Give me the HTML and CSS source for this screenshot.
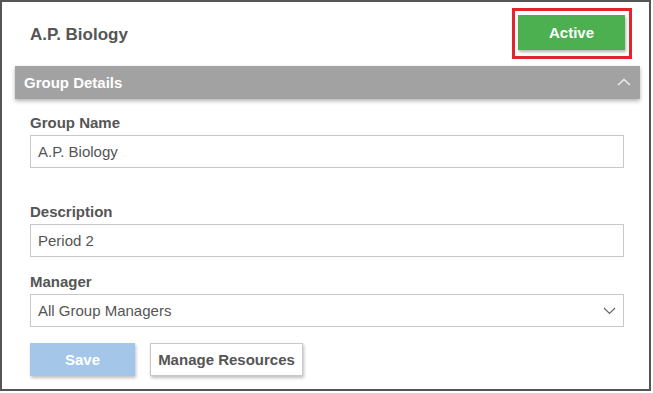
FILE: index.html
```html
<!DOCTYPE html>
<html lang="en">
<head>
    <meta charset="UTF-8">
    <meta name="viewport" content="width=device-width, initial-scale=1.0">
    <title>A.P. Biology</title>
    <link rel="stylesheet" href="styles.css">
</head>
<body>
    <div class="frame">
        <div class="top">
            <h1>A.P. Biology</h1>
            <div class="highlight">
                <button class="active-button">Active</button>
            </div>
        </div>

        <!-- Group details panel -->
        <div class="panel-header">
            <span>Group Details</span>
            <svg class="chevron-up" width="14" height="8" viewBox="0 0 14 8">
                <polyline points="1,7 7,1.5 13,7" fill="none" stroke="#f2f2f2" stroke-width="1.3"/>
            </svg>
        </div>

        <form class="details">
            <div class="form-group first">
                <label>Group Name</label>
                <input type="text" value="A.P. Biology">
            </div>
            <div class="form-group">
                <label>Description</label>
                <input type="text" value="Period 2">
            </div>
            <div class="form-group">
                <label>Manager</label>
                <div class="select">
                    <span>All Group Managers</span>
                    <svg width="13" height="8" viewBox="0 0 13 8">
                        <polyline points="1,1 6.5,6.5 12,1" fill="none" stroke="#666" stroke-width="1.2"/>
                    </svg>
                </div>
            </div>
            <div class="buttons">
                <button type="button" class="save-button">Save</button>
                <button type="button" class="resources-button">Manage Resources</button>
            </div>
        </form>
    </div>
</body>
</html>
```

FILE: styles.css
```css
body {
    font-family: 'Liberation Sans', Arial, sans-serif;
    background-color: #fff;
    margin: 0;
    padding: 0;
    color: #555;
}
.frame {
    width: 651px;
    height: 391px;
    box-sizing: border-box;
    border: 2px solid #555;
}
.top {
    display: flex;
    justify-content: space-between;
    align-items: center;
    padding: 6px 17px 0 28px;
}
h1 {
    margin: 3px 0 0 0;
    font-size: 17px;
    font-weight: bold;
    color: #555;
}
.highlight {
    border: 3px solid #e0252b;
    padding: 4px 4px 6px 3px;
}
.active-button {
    display: block;
    width: 107px;
    height: 35px;
    background-color: #4caf50;
    color: #fff;
    border: none;
    font-family: inherit;
    font-size: 15px;
    font-weight: bold;
    box-shadow: 1px 2px 3px rgba(0, 0, 0, 0.3);
}
.panel-header {
    display: flex;
    justify-content: space-between;
    align-items: center;
    height: 33px;
    margin: 7px 9px 0 13px;
    padding: 0 9px 0 9px;
    background-color: #a2a2a2;
    color: #fff;
    font-size: 15px;
    font-weight: bold;
    box-shadow: 0 2px 4px rgba(0, 0, 0, 0.3);
}
.chevron-up {
    margin-top: -1px;
}
.details {
    padding: 15px 25px 0 28px;
}
.form-group {
    margin-bottom: 16px;
}
.form-group.first {
    margin-bottom: 35px;
}
.form-group label {
    display: block;
    font-size: 15px;
    line-height: 18px;
    font-weight: bold;
    margin-bottom: 3px;
}
.form-group input,
.select {
    display: block;
    width: 100%;
    height: 33px;
    box-sizing: border-box;
    padding: 0 7px;
    border: 1px solid #c8c8c8;
    font-family: inherit;
    font-size: 15px;
    color: #555;
    margin: 0;
}
.select {
    display: flex;
    justify-content: space-between;
    align-items: center;
    padding-right: 7px;
}
.buttons {
    display: flex;
    gap: 15px;
}
.buttons button {
    height: 33px;
    font-family: inherit;
    font-size: 15px;
    font-weight: bold;
    box-sizing: border-box;
    box-shadow: 1px 2px 3px rgba(0, 0, 0, 0.25);
}
.save-button {
    width: 105px;
    background-color: #a4c6e8;
    color: #fff;
    border: none;
}
.resources-button {
    width: 153px;
    background-color: #fff;
    color: #555;
    border: 1px solid #c8c8c8;
}
```
